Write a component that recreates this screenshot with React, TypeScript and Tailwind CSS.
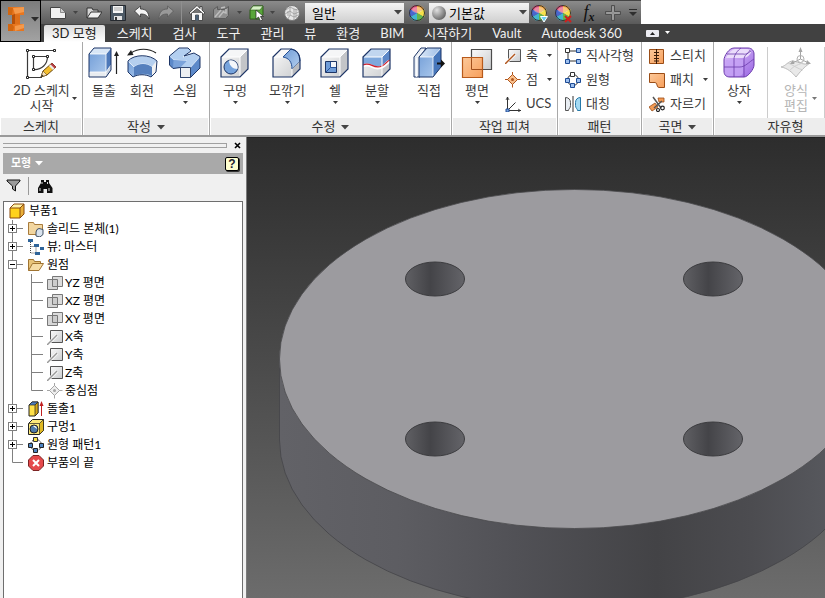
import type { ReactNode } from "react"

type IconProps = { children: ReactNode; size?: number; className?: string; box?: string }

function Icon({ children, size = 16, className = "", box }: IconProps) {
  return (
    <svg
      width={size}
      height={size}
      viewBox={box ?? `0 0 ${size} ${size}`}
      fill="none"
      className={`shrink-0 ${className}`}
      aria-hidden="true"
    >
      {children}
    </svg>
  )
}

function Caret({ className = "text-[#444]", big = false }: { className?: string; big?: boolean }) {
  return big ? (
    <svg width="8" height="5" className={`shrink-0 ${className}`} aria-hidden="true">
      <path d="M0 0h8L4 4.5z" fill="currentColor" />
    </svg>
  ) : (
    <svg width="5" height="4" className={`shrink-0 ${className}`} aria-hidden="true">
      <path d="M0 0h5L2.5 3z" fill="currentColor" />
    </svg>
  )
}

/* ---------- gradients shared by the icons ---------- */

function Defs() {
  return (
    <svg width="0" height="0" className="absolute" aria-hidden="true">
      <defs>
        <linearGradient id="blue" x1="0" y1="0" x2="1" y2="1">
          <stop offset="0" stopColor="#6f9bd6" />
          <stop offset="1" stopColor="#b4cfef" />
        </linearGradient>
        <linearGradient id="blueTop" x1="0" y1="0" x2="1" y2="0">
          <stop offset="0" stopColor="#dbe8f7" />
          <stop offset="1" stopColor="#9dbde6" />
        </linearGradient>
        <linearGradient id="gray" x1="0" y1="0" x2="1" y2="1">
          <stop offset="0" stopColor="#fbfbfb" />
          <stop offset="1" stopColor="#c9cbcd" />
        </linearGradient>
        <linearGradient id="orange" x1="0" y1="0" x2="1" y2="1">
          <stop offset="0" stopColor="#fcc99a" />
          <stop offset="1" stopColor="#f79f5c" />
        </linearGradient>
        <linearGradient id="purple" x1="0" y1="0" x2="1" y2="1">
          <stop offset="0" stopColor="#e0c5fb" />
          <stop offset="1" stopColor="#9a66e2" />
        </linearGradient>
      </defs>
    </svg>
  )
}

/* ---------- large ribbon icons ---------- */

const navy = "#1d3566"

const SketchIcon = () => (
  <Icon size={32}>
    <path d="M2.500 3.500H29M2.500 3.500V30.500H17M8.500 9.500V22.500M8.500 9.500H22.500M22.500 9.500C22.500 17 17 23 8.500 22.500" stroke="#3a3a3a" strokeWidth="1.200" />
    <path d="M1.500 2.500h2v2h-2zM28.500 2.500h2v2h-2zM1.500 29.500h2v2h-2zM7.500 8.500h2v2h-2zM21.500 8.500h2v2h-2zM7.500 21.500h2v2h-2z" fill="#fff" stroke="#222" />
    <path d="M16 30l2-6L27 16l4 4-9 8z" fill="#f3bd2c" stroke="#6c4a13" />
    <path d="M25.500 17.500L27 16l4 4-1.500 1.500z" fill="#b93a4a" />
    <path d="M24 19l1.500-1.500 4 4L28 23z" fill="#e9e9e9" />
    <path d="M16 30l2-6 4 4z" fill="#f7e2bb" stroke="#6c4a13" strokeWidth="0.600" />
    <path d="M16 30l1-2.500 1.500 1.500z" fill="#222" />
  </Icon>
)

const ExtrudeIcon = () => (
  <Icon size={32}>
    <path d="M1 7l5-6h17v22l-5 7H1z" fill="url(#blue)" />
    <path d="M1 7l5-6h17l-5 6z" fill="#d8e6f6" />
    <path d="M18 7l5-6v22l-5 7z" fill="#4c78b9" />
    <path d="M1 25h17v5H1z" fill="#e8ecf0" />
    <path d="M18 25l5-7v5l-5 7z" fill="#c9d3e0" />
    <path d="M2 25h16l5-7M2 7h16v22M18 7l5-6" stroke="#fff" strokeWidth="0.800" />
    <path d="M1 7l5-6h17v22l-5 7H1z" stroke={navy} strokeLinejoin="round" />
    <path d="M28.500 27V8" stroke="#222" strokeWidth="1.200" />
    <path d="M28.500 4l2.500 5h-5z" fill="#222" />
  </Icon>
)

const RevolveIcon = () => (
  <Icon size={32}>
    <path d="M2 14C8 7 24 7 31 14l-1 11-5 5c-5-3-13-3-18 0l-5-5z" fill="url(#blue)" />
    <path d="M2 14C8 7 24 7 31 14l-5 6c-5-4-13-4-18 0z" fill="#b5cfee" stroke="#fff" strokeWidth="0.700" />
    <path d="M8 20c5-4 13-4 18 0v9c-5-3-13-3-18 0z" fill="#5680bd" />
    <path d="M26 20l5-6-1 11-4 5z" fill="#f2f2f2" />
    <path d="M2 14C8 7 24 7 31 14l-1 11-5 5c-5-3-13-3-18 0l-5-5z" stroke={navy} strokeLinejoin="round" />
    <path d="M5 6C12 1 23 1 30 6" stroke="#222" strokeWidth="1.200" />
    <path d="M1 8.500l4-5.500 2.500 5z" fill="#222" />
  </Icon>
)

const SweepIcon = () => (
  <Icon size={32}>
    <path d="M.5 9L10 1h9l3 3-7 5 10-3 6 3.500V21l-9.500 9.500h-10v-10L4 21.500.5 18z" fill="#5c89c9" />
    <path d="M.5 9L10 1h9l3 3-8 6 11-4 6 3.500-9.500 11h-10L18 14 5 13z" fill="#b3cff0" stroke="#fff" strokeWidth="0.600" />
    <path d="M4.500 13L18 14l-6.500 6.500-7.500 1z" fill="#7ba3da" />
    <path d="M.5 9L10 1h9l3 3-7 5 10-3 6 3.500V21l-9.500 9.500h-10v-10L4 21.500.5 18z" stroke={navy} strokeLinejoin="round" />
    <path d="M11.500 20.500h10v10h-10z" fill="#eceff2" stroke="#30466e" />
  </Icon>
)

function Cube({ children, front = "url(#gray)", top = "#f5f6f7" }: { children?: ReactNode; front?: string; top?: string }) {
  return (
    <Icon size={32}>
      <path d="M2 10l8-8h19v20l-8 8H2z" fill={front} />
      <path d="M2 10l8-8h19l-8 8z" fill={top} />
      <path d="M21 10l8-8v20l-8 8z" fill="#c3c5c8" />
      {children}
      <path d="M3 10h18v19M21 10l8-8" stroke="#fff" />
      <path d="M2 10l8-8h19v20l-8 8H2z" stroke={navy} strokeWidth="1.200" />
    </Icon>
  )
}

const HoleIcon = () => (
  <Cube>
    <circle cx="12" cy="20" r="7" fill="#76a3dc" stroke={navy} />
    <path d="M10 13.500a7 7 0 0 1 8.500 8.500c-5 0-8-3-8.500-8.500z" fill="#f4f7fb" />
  </Cube>
)

const FilletIcon = () => (
  <Icon size={32}>
    <path d="M2 10l8-8h10c6 1 9 5 9 12v8l-8 8H2z" fill="url(#gray)" />
    <path d="M2 10l8-8h10l-8 8z" fill="#f8f8f8" />
    <path d="M12 10l8-8c6 1 9 5 9 12l-8 8c0-7-3-11-9-12z" fill="url(#blue)" stroke="#234e94" />
    <path d="M21 22l8-8v8l-8 8z" fill="#b9bbbf" />
    <path d="M3 10h9M21 22v8" stroke="#fff" />
    <path d="M2 10l8-8h10c6 1 9 5 9 12v8l-8 8H2z" stroke={navy} strokeWidth="1.200" />
  </Icon>
)

const ShellIcon = () => (
  <Cube>
    <path d="M6.500 14.500h11v11h-11z" fill="#6f9cd7" stroke={navy} />
    <path d="M11.500 15h5.500v6h-5.500z" fill="#f3f6fa" />
    <path d="M7 25l4.500-4.500H17M11.500 15v5.500" stroke="#26529a" />
  </Cube>
)

const SplitIcon = () => (
  <Cube top="#c1d6ef">
    <path d="M2 10h19v9c-7 5-11-5-19-1z" fill="#7ea8dc" />
    <path d="M21 10l8-8v11l-8 7z" fill="#5c88c8" />
    <path d="M2 19c8-4 10 5 19 1 4-2 5-5 8-6" stroke="#fff" strokeWidth="3" />
    <path d="M2 18c8-4 10 5 19 1 4-2 5-5 8-6" stroke="#cf202c" strokeWidth="1.300" />
  </Cube>
)

const DirectIcon = () => (
  <Icon size={32}>
    <path d="M1 10l7-9h5l-6 9v20H1z" fill="#e9eef4" stroke={navy} />
    <path d="M6 10l8-9h14v19l-8 10H6z" fill="url(#blue)" />
    <path d="M6 10l8-9h14l-8 9z" fill="url(#blueTop)" />
    <path d="M20 10l8-9v19l-8 10z" fill="#4777bb" />
    <path d="M7 10h13v20M20 10l8-9M3.500 11v19M4 10l7-8" stroke="#fff" strokeWidth="0.800" />
    <path d="M6 10l8-9h14v19l-8 10H6z" stroke={navy} strokeLinejoin="round" />
    <path d="M24 16.500h5" stroke="#111" strokeWidth="2" />
    <path d="M28 12.500l4 4-4 4z" fill="#111" />
  </Icon>
)

const PlaneIcon = () => (
  <Icon size={32}>
    <path d="M10.500 2.500h20v20h-20z" fill="url(#gray)" stroke="#4c4c4c" strokeWidth="1.200" />
    <path d="M1.500 10.500h20v20h-20z" fill="url(#orange)" stroke="#b85a1b" strokeWidth="1.200" />
    <path d="M10.500 11v11.500h11" stroke="#a14f1b" />
  </Icon>
)

const BoxFormIcon = () => (
  <Icon size={32}>
    <path d="M1 13c0-4 5-12 10-12h14c4 0 6 3 6 6v11c0 4-6 12-10 12H7c-4 0-6-2-6-6z" fill="url(#purple)" stroke="#6a3bab" />
    <path d="M3 11C5 7 8 3 12 2h12c4 0 5 3 3 5-2 3-5 4-8 4z" fill="#eadcfb" />
    <path d="M3 13h17v12c0 3-2 4-5 4H7c-3 0-5-2-5-5z" fill="#c6a2f5" opacity="0.800" />
    <path d="M11 30V12c0-4 4-9 7-11M1 20h16c5 0 9-5 14-8M4 7h16c4 1 6-2 7-4M21 30V13c0-5 3-6 7-9" stroke="#6a3bab" strokeWidth="0.800" />
  </Icon>
)

const EditFormIcon = () => (
  <Icon size={32}>
    <path d="M1 20c5-1 7-6 12-6 6 1 12 5 17 2-4 3-7 5-14 14-4-5-9-9-15-10z" fill="#e9e9e9" stroke="#bcbcbc" />
    <path d="M8 16c5 2 10 6 15 7M9 24c4-4 7-6 14-8" stroke="#cfcfcf" />
    <path d="M20.500 12V3M20.500 12l-8 4M20.500 12l8 4" stroke="#a5a5a5" />
    <path d="M20.500 0l2 5h-4zM10 17l3-4 1.500 4zM31 17l-4-4-1 4z" fill="#a5a5a5" />
    <circle cx="20.500" cy="12" r="3.500" stroke="#b0b0b0" />
  </Icon>
)

/* ---------- small ribbon icons ---------- */

const AxisIcon = ({ color = "#b0561e" }: { color?: string }) => (
  <Icon>
    <path d="M3.500 1.500h12v12h-12z" fill="url(#gray)" stroke="#555" />
    <path d="M0 16L10 6" stroke="#fff" strokeWidth="3" />
    <path d="M0 16L10 6" stroke={color} strokeWidth="1.500" />
  </Icon>
)

const PointIcon = ({ color = "#b0561e", fill = "#f9c08c" }: { color?: string; fill?: string }) => (
  <Icon>
    <path d="M7.500 2.500l5 5-5 5-5-5z" fill={fill} stroke={color} />
    <path d="M7.500 0v3M7.500 12v3.500M0 7.500h3M12 7.500h3.500" stroke={color} />
    <circle cx="7.500" cy="7.500" r="1.500" fill={color} />
  </Icon>
)

const UcsIcon = () => (
  <Icon>
    <path d="M2.500 1v13.500H16M2.500 14.500l8-8" stroke="#333" />
    <path d="M1 4l1.500-3L4 4M13 13l2.500 1.500L13 16" stroke="#333" strokeWidth="0.800" />
    <path d="M1 13h3v3H1z" fill="#7aa5de" stroke="#244f96" />
  </Icon>
)

const RectPatternIcon = () => (
  <Icon>
    <path d="M3 3h10M3 13h10M3 3v10" stroke="#333" />
    <path d="M.5.5h4v4h-4z" fill="#fff" stroke="#333" />
    <path d="M11.500.5h4v4h-4zM.5 11.500h4v4h-4zM11.500 11.500h4v4h-4z" fill="#9dc0ef" stroke="#1d4b95" />
  </Icon>
)

const CircPatternIcon = ({ dark = false }: { dark?: boolean }) => (
  <Icon>
    <circle cx="8" cy="8" r="5.500" stroke="#333" strokeDasharray={dark ? "2 1" : undefined} />
    <path d="M5.500.5h4v4h-4z" fill={dark ? "#f9e24a" : "#fff"} stroke="#333" />
    <path d="M.5 6.500h4v4h-4zM11.500 6.500h4v4h-4zM5.500 11.500h4v4h-4z" fill={dark ? "#4f86c4" : "#9dc0ef"} stroke={dark ? "#222" : "#1d4b95"} />
  </Icon>
)

const MirrorIcon = () => (
  <Icon>
    <path d="M.5 1.500c3 0 5 2 5 5v3c0 3-2 3-2 5h-3z" fill="#e9eef3" stroke="#555" />
    <path d="M15.500 1.500c-3 0-5 2-5 5v3c0 3 2 3 2 5h3z" fill="#a4daf3" stroke="#2678a8" />
    <path d="M8 0v16" stroke="#333" />
  </Icon>
)

const StitchIcon = () => (
  <Icon>
    <path d="M.5 1.500h14v14H.5z" fill="url(#orange)" stroke="#9b4d16" />
    <path d="M7.500 1v15M5 4.500h5M5 7.500h5M5 10.500h5M5 13h5" stroke="#3b1d08" />
  </Icon>
)

const PatchIcon = () => (
  <Icon>
    <path d="M.5 1.500h15v14H10c-3 0-1-5-4-5H.5z" fill="url(#orange)" stroke="#9b4d16" />
  </Icon>
)

const TrimIcon = () => (
  <Icon>
    <path d="M0 11l6-4 3 4-6 4zM9 2h6v4h-5z" fill="#f39a53" stroke="#9b4d16" strokeWidth="0.800" />
    <path d="M4 1l8 11M13 5L5 12" stroke="#555" strokeWidth="1.500" />
    <circle cx="13.500" cy="12" r="1.800" stroke="#222" strokeWidth="1.200" />
    <circle cx="9" cy="14" r="1.500" stroke="#222" strokeWidth="1.200" />
  </Icon>
)

/* ---------- quick access icons ---------- */

const NewIcon = () => (
  <Icon>
    <path d="M.5 2.500h10l5 5v6H.5z" fill="#f1f1f1" stroke="#444" />
    <path d="M10.500 2.500v5h5z" fill="#cfcfcf" stroke="#666" strokeWidth="0.700" />
  </Icon>
)

const OpenIcon = () => (
  <Icon>
    <path d="M1 13V3h5l1 2h5v3" fill="#d4d4d4" stroke="#333" />
    <path d="M1 13l4-6h11l-4 6z" fill="#f0f0f0" stroke="#333" />
  </Icon>
)

const SaveIcon = () => (
  <Icon>
    <path d="M.5.5h15v15H.5z" fill="#4d5a66" stroke="#25292e" />
    <path d="M3 1h10v7H3z" fill="#f5f5f5" />
    <path d="M4 3h8M4 5h8" stroke="#aaa" />
    <path d="M4 11h8v4H4z" fill="#e3e3e3" />
    <path d="M5 12h2v3H5z" fill="#333" />
  </Icon>
)

const UndoIcon = ({ flip = false }: { flip?: boolean }) => (
  <Icon>
    <path
      d={flip ? "M15.500 6L9.500 1v3C4 4 1 7 1 14c2-4 4-5 8.500-5v3z" : "M.5 6l6-5v3c5.500 0 8.500 3 8.500 10-2-4-4-5-8.500-5v3z"}
      fill={flip ? "#999" : "#f4f4f4"}
      stroke={flip ? "#5c5c5c" : "#333"}
      strokeWidth="0.800"
    />
  </Icon>
)

const HomeIcon = () => (
  <Icon>
    <path d="M2.500 8v7.500h4V10h3v5.500h4V8" fill="#f5f5f5" stroke="#333" strokeWidth="0.800" />
    <path d="M6.500 10h3v5.500h-3z" fill="#4a6076" />
    <path d="M8 .5L0 8l1.500 1L8 3.500 14.500 9 16 8l-3-3V1.500h-2v2z" fill="#fff" stroke="#333" strokeWidth="0.800" />
  </Icon>
)

const UpdateIcon = () => (
  <Icon>
    <path d="M.5 4.500l4-3v3h7l4-3v9l-3 3H.5z" fill="#8f8f8f" stroke="#5c5c5c" />
    <path d="M2 12l6-7M6 12l5-6M13 4v4l-3-1M8 3l4-1" stroke="#bdbdbd" strokeWidth="1.500" />
  </Icon>
)

const SelectIcon = () => (
  <Icon>
    <path d="M1 5l3-4h10v9l-4 4H1z" fill="#58a53a" stroke="#2d5d19" />
    <path d="M1 5l3-4h10l-3 4z" fill="#d6f0c6" stroke="#2d5d19" strokeWidth="0.600" />
    <path d="M7 5v9l2.500-2 2 4 2-1-2-3.500h3z" fill="#fff" stroke="#222" strokeWidth="0.700" />
  </Icon>
)

const BallIcon = () => (
  <Icon>
    <circle cx="8" cy="8" r="7.500" fill="#e6e6e6" stroke="#777" />
    <path d="M2 5l4-3 4 2 4 1M1 9l5-3 4 3 5-2M4 14l2-4 4 2 4-2M6 2v4M10 4v5M6 6v4M10 9v6M4 6v5M12 4v9" stroke="#999" strokeWidth="0.800" />
  </Icon>
)

const ColorWheel = () => (
  <Icon>
    <path d="M8 8V0a8 8 0 0 1 7 4z" fill="#f5a63a" />
    <path d="M8 8l7-4a8 8 0 0 1 0 8z" fill="#f6e04a" />
    <path d="M8 8l7 4a8 8 0 0 1-7 4z" fill="#63b74b" />
    <path d="M8 8v8a8 8 0 0 1-7-4z" fill="#42b6cf" />
    <path d="M8 8l-7 4a8 8 0 0 1 0-8z" fill="#4966cf" />
    <path d="M8 8L1 4a8 8 0 0 1 7-4z" fill="#df4a76" />
    <circle cx="8" cy="8" r="7.500" stroke="#333" />
    <ellipse cx="8" cy="5" rx="5" ry="3" fill="#fff" opacity="0.350" />
  </Icon>
)

const AdjustIcon = () => (
  <span className="relative">
    <ColorWheel />
    <Icon size={8} className="absolute -right-px -bottom-0.5">
      <path d="M.5 1.500h7L4 7z" fill="#6cd0f2" stroke="#fff" />
    </Icon>
  </span>
)

const ClearIcon = () => (
  <span className="relative">
    <ColorWheel />
    <Icon size={8} className="absolute -right-px -bottom-0.5">
      <path d="M1 1l6 6M7 1L1 7" stroke="#d01f1f" strokeWidth="2" />
    </Icon>
  </span>
)

const PlusIcon = () => (
  <Icon>
    <path d="M6.500.5h3v6h6v3h-6v6h-3v-6h-6v-3h6z" fill="#7b7b7b" stroke="#4f4f4f" />
    <path d="M7.500 1.500h1v6h6v1h-6v6h-1v-6h-6v-1h6z" stroke="#9a9a9a" />
  </Icon>
)

/* ---------- header ---------- */

function QuickButton({ label, className, children }: { label: string; className: string; children: ReactNode }) {
  return (
    <button aria-label={label} className={`flex h-[23px] shrink-0 items-center justify-center ${className}`}>
      {children}
    </button>
  )
}

function QuickAccess() {
  return (
    <div className="flex h-6 w-fit items-center border-t border-[#444] bg-linear-to-b from-[#8b8b8b] to-[#5a5a5a]">
      <QuickButton label="새로 만들기" className="ml-[7px] w-5"><NewIcon /></QuickButton>
      <QuickButton label="새로 만들기 옵션" className="w-3.5"><Caret /></QuickButton>
      <QuickButton label="열기" className="w-6"><OpenIcon /></QuickButton>
      <QuickButton label="저장" className="w-6"><SaveIcon /></QuickButton>
      <QuickButton label="명령 취소" className="w-6"><UndoIcon /></QuickButton>
      <QuickButton label="명령 복구" className="w-6"><UndoIcon flip /></QuickButton>
      <span className="mx-[3px] h-[23px] w-px bg-[#8f8f8f]" />
      <QuickButton label="홈" className="w-6"><HomeIcon /></QuickButton>
      <QuickButton label="업데이트" className="w-6"><UpdateIcon /></QuickButton>
      <QuickButton label="업데이트 옵션" className="w-3"><Caret /></QuickButton>
      <QuickButton label="선택" className="w-6"><SelectIcon /></QuickButton>
      <QuickButton label="선택 옵션" className="w-1.5"><Caret /></QuickButton>
      <QuickButton label="재질" className="ml-[7px] w-5"><BallIcon /></QuickButton>
      <span className="ml-[3px] flex h-5 w-[99px] items-center bg-linear-to-b from-[#f4f4f4] to-[#cfcfcf] pr-0.5">
        <select aria-label="재질 선택" className="min-w-0 flex-1 appearance-none pl-[7px] text-[13px] leading-5 text-black">
          <option>일반</option>
        </select>
        <Caret big className="text-[#444]" />
      </span>
      <QuickButton label="모양" className="w-[25px]"><ColorWheel /></QuickButton>
      <span className="flex h-5 w-[100px] items-center bg-linear-to-b from-[#f4f4f4] to-[#cfcfcf] pr-0.5 pl-[3px]">
        <span className="h-3.5 w-3.5 shrink-0 rounded-full bg-radial-[at_35%_30%] from-[#e0e0e0] via-[#909090] to-[#3f3f3f]" />
        <select aria-label="모양 선택" className="min-w-0 flex-1 appearance-none pl-[3px] text-[13px] leading-5 text-black">
          <option>기본값</option>
        </select>
        <Caret big className="text-[#444]" />
      </span>
      <QuickButton label="조정" className="w-5"><AdjustIcon /></QuickButton>
      <QuickButton label="지우기" className="w-7"><ClearIcon /></QuickButton>
      <QuickButton label="매개변수" className="w-6 font-['Liberation_Serif',serif] text-[18px] text-[#111] italic">
        <span>f<sub className="text-[12px] font-bold">x</sub></span>
      </QuickButton>
      <QuickButton label="추가" className="w-6"><PlusIcon /></QuickButton>
      <QuickButton label="사용자화" className="w-4">
        <svg width="8" height="7" aria-hidden="true">
          <path d="M0 0h8v1H0zM0 3h8L4 7z" fill="#2e2e2e" />
        </svg>
      </QuickButton>
    </div>
  )
}

const tabs = ["스케치", "검사", "도구", "관리", "뷰", "환경", "BIM", "시작하기", "Vault", "Autodesk 360"]

function Header() {
  return (
    <header className="flex bg-[#414141]">
      <button
        aria-label="응용프로그램 메뉴"
        className="flex w-[41px] shrink-0 items-center justify-between border border-black bg-linear-to-b from-[#7c7c7c] to-[#a2a2a2] pr-px pb-1 pl-1.5"
      >
        <svg width="18" height="28" viewBox="0 0 18 28" aria-hidden="true">
          <path d="M1 2h16v8h-4v9h4v7H1v-7h4v-9H1z" fill="#e8761f" />
          <path d="M1 2l5 1-1 7H1zM1 19h4l2 3-1 4H1z" fill="#d2660f" />
          <path d="M6 3l11-1v5l-9 2zM8 21l9-2v4l-9 3z" fill="#f4994b" />
          <path d="M5 10l3-1v10H5z" fill="#b65009" />
          <path d="M8 9l5 1v9H8z" fill="#de6f1a" />
        </svg>
        <Caret big className="text-[#2c2c2c]" />
      </button>
      <div className="flex min-w-0 flex-1 flex-col">
        <div className="h-6 bg-white">
          <QuickAccess />
        </div>
        <nav className="flex h-[18px] items-center bg-[#414141] text-[13px] leading-[18px] whitespace-nowrap text-[#f0f0f0]">
          <a href="#" className="ml-[3px] h-[17px] self-end rounded-t-xs bg-linear-to-b from-[#dcdcdc] to-white px-2 leading-4 text-[#222]">
            3D 모형
          </a>
          <div className="ml-3 flex gap-5 leading-4">
            {tabs.map((tab) => (
              <a key={tab} href="#">{tab}</a>
            ))}
          </div>
          <button aria-label="리본 최소화" className="ml-6 flex items-center gap-1.5">
            <svg width="13" height="7" aria-hidden="true">
              <rect width="13" height="7" rx="1" fill="#ececf2" />
              <path d="M4 5l2.500-3L9 5z" fill="#222" />
            </svg>
            <Caret className="text-white" />
          </button>
        </nav>
      </div>
    </header>
  )
}

/* ---------- ribbon ---------- */

type PanelProps = { title: string; menu?: boolean; className: string; children: ReactNode }

function Panel({ title, menu, className, children }: PanelProps) {
  return (
    <section className={`flex flex-col border-r border-[#a9a9a9] ${className}`}>
      <div className="flex h-[76px] pt-[5px]">{children}</div>
      <h2 className="flex h-[17px] items-center justify-center gap-1.5 border-x border-white bg-[#ededed] pb-px text-[13px] leading-4 text-[#333]">
        {title}
        {menu && <Caret big className="mt-0.5 text-[#444]" />}
      </h2>
    </section>
  )
}

type ToolProps = { icon: ReactNode; label: string; menu?: boolean; className: string }

function Tool({ icon, label, menu, className }: ToolProps) {
  return (
    <button className={`flex shrink-0 flex-col items-center ${className}`}>
      {icon}
      <span className="mt-0.5 leading-[18px]">{label}</span>
      {menu && <Caret className="mt-0.5" />}
    </button>
  )
}

function SmallTool({ icon, label, menu }: { icon: ReactNode; label: string; menu?: boolean }) {
  return (
    <button className="flex h-6 items-center gap-[5px]">
      {icon}
      <span>{label}</span>
      {menu && <Caret className="ml-1" />}
    </button>
  )
}

function Ribbon() {
  return (
    <div className="flex overflow-hidden border-b-2 border-[#9a9a9a] bg-white text-[13px] whitespace-nowrap text-[#3c3c3c]">
      <Panel title="스케치" className="w-[83px] shrink-0">
        <button className="flex w-full justify-center">
          <span className="flex flex-col items-center pl-2">
            <SketchIcon />
            <span className="mt-1 leading-[15px]">2D 스케치<br />시작</span>
          </span>
          <Caret className="mt-[50px] ml-0.5" />
        </button>
      </Panel>
      <Panel title="작성" menu className="w-[127px] shrink-0">
        <Tool icon={<ExtrudeIcon />} label="돌출" className="ml-0.5 w-[38px]" />
        <Tool icon={<RevolveIcon />} label="회전" className="w-[38px]" />
        <Tool icon={<SweepIcon />} label="스윕" menu className="w-12" />
      </Panel>
      <Panel title="수정" menu className="w-[242px] shrink-0">
        <Tool icon={<HoleIcon />} label="구멍" menu className="w-[50px]" />
        <Tool icon={<FilletIcon />} label="모깎기" menu className="w-[54px]" />
        <Tool icon={<ShellIcon />} label="쉘" menu className="w-[42px]" />
        <Tool icon={<SplitIcon />} label="분할" menu className="w-[42px]" />
        <span className="ml-[7px] w-px bg-[#ccc]" />
        <Tool icon={<DirectIcon />} label="직접" className="w-12" />
      </Panel>
      <Panel title="작업 피쳐" className="w-[106px] shrink-0">
        <Tool icon={<PlaneIcon />} label="평면" menu className="w-[50px]" />
        <div className="-mt-[3px] ml-[3px]">
          <SmallTool icon={<AxisIcon />} label="축" menu />
          <SmallTool icon={<PointIcon />} label="점" menu />
          <SmallTool icon={<UcsIcon />} label="UCS" />
        </div>
      </Panel>
      <Panel title="패턴" className="w-[84px] shrink-0">
        <div className="-mt-[3px] ml-[7px]">
          <SmallTool icon={<RectPatternIcon />} label="직사각형" />
          <SmallTool icon={<CircPatternIcon />} label="원형" />
          <SmallTool icon={<MirrorIcon />} label="대칭" />
        </div>
      </Panel>
      <Panel title="곡면" menu className="w-[72px] shrink-0">
        <div className="-mt-[3px] ml-[7px]">
          <SmallTool icon={<StitchIcon />} label="스티치" />
          <SmallTool icon={<PatchIcon />} label="패치" menu />
          <SmallTool icon={<TrimIcon />} label="자르기" />
        </div>
      </Panel>
      <Panel title="자유형" className="min-w-36 flex-1">
        <Tool icon={<BoxFormIcon />} label="상자" menu className="w-[50px]" />
        <span className="ml-[3px] w-px bg-[#ccc]" />
        <button disabled className="flex w-[49px] justify-end text-[#b5b5b5]">
          <span className="flex flex-col items-center">
            <EditFormIcon />
            <span className="mt-1 leading-[15px]">양식<br />편집</span>
          </span>
          <Caret className="mt-[50px] text-[#777]" />
        </button>
        <span className="ml-[7px] w-px bg-[#ccc]" />
      </Panel>
    </div>
  )
}

/* ---------- model browser ---------- */

const PartIcon = () => (
  <Icon>
    <path d="M1 5l4-4h10v10l-4 4H1z" fill="#ffd21c" />
    <path d="M1 5l4-4h10l-4 4z" fill="#fff3a8" />
    <path d="M11 5l4-4v10l-4 4z" fill="#e9b03a" />
    <path d="M1 5l4-4h10v10l-4 4H1zM1 5h10v10M11 5l4-4" stroke="#8a4b0c" strokeLinejoin="round" />
  </Icon>
)

const BodiesIcon = () => (
  <Icon>
    <path d="M.5 13.500v-12h5l1 2h8v10z" fill="#f2d6a0" stroke="#a87b3b" />
    <path d="M9 8.500l2-1 4 1v5l-3 2.500-4-1v-4z" fill="#d9e3ee" stroke="#3f4f63" />
  </Icon>
)

const ViewsIcon = () => (
  <Icon>
    <path d="M2.500 3v11h4M2.500 7.500h6M8 7.500v7" stroke="#444" strokeDasharray="1 1" />
    <path d="M0 0h5v3H0zM6 5h5v3H6zM12 8h4v3h-4zM7 13h5v3H7z" fill="#2f6499" />
  </Icon>
)

const FolderIcon = () => (
  <Icon>
    <path d="M.5 13.500V2.500h5l1 2h6v3" fill="#e8c47b" stroke="#a07432" />
    <path d="M.5 13.500l4-7h11l-4.500 7z" fill="#f6dca6" stroke="#a07432" />
  </Icon>
)

const WorkPlaneIcon = () => (
  <Icon>
    <path d="M5.500 1.500h10v10h-10z" fill="#dcdcdc" stroke="#777" />
    <path d="M.5 4.500h10v10H.5z" fill="#c4c4c4" fillOpacity="0.700" stroke="#777" />
    <path d="M5.500 5v6.500h5" stroke="#777" />
  </Icon>
)

const ExtrusionIcon = () => (
  <Icon>
    <path d="M1 4l3-3h6v11l-3 3H1z" fill="#ffe14a" stroke="#222" />
    <path d="M1 4l3-3h6L7 4z" fill="#4f7fc0" stroke="#222" strokeWidth="0.700" />
    <path d="M7 4l3-3v11l-3 3z" fill="#d4a514" stroke="#222" strokeWidth="0.700" />
    <path d="M13.500 15V3" stroke="#c11f1f" />
    <path d="M13.500 0l2 5h-4z" fill="#c11f1f" />
  </Icon>
)

const HoleFeatureIcon = () => (
  <Icon>
    <path d="M.5 4.500l4-4h11v11l-4 4H.5z" fill="#fbe87a" stroke="#222" />
    <path d="M11.500 4.500l4-4v11l-4 4z" fill="#e0b822" stroke="#222" strokeWidth="0.700" />
    <path d="M1 4.500h10.500" stroke="#222" strokeWidth="0.700" />
    <circle cx="6" cy="10" r="4" fill="#4f7ba8" stroke="#222" />
    <path d="M5 7a3 3 0 0 1 4 3z" fill="#fff" />
  </Icon>
)

const EndIcon = () => (
  <Icon>
    <path d="M5 .5h6L15.500 5v6L11 15.500H5L.5 11V5z" fill="#e5494b" stroke="#7d2424" />
    <path d="M5 5l6 6M11 5l-6 6" stroke="#fff" strokeWidth="2" />
  </Icon>
)

// Guide lines with an optional +/- box, one row high
function Branch({ state, last }: { state?: "open" | "closed"; last?: boolean }) {
  return (
    <svg width="24" height="18" className="shrink-0" aria-hidden="true">
      <path d={last ? "M8.500 0V8.500H19" : "M8.500 0V18M8.500 8.500H19"} fill="none" stroke="#808080" />
      {state && (
        <>
          <rect x="4.500" y="4.500" width="8" height="8" fill="#fff" stroke="#808080" />
          <path d={state === "open" ? "M6 8.500h5" : "M6 8.500h5M8.500 6v5"} stroke="#000" />
        </>
      )}
    </svg>
  )
}

function SubBranch({ last }: { last?: boolean }) {
  return (
    <>
      <svg width="24" height="18" className="shrink-0" aria-hidden="true">
        <path d="M8.500 0V18" stroke="#808080" />
      </svg>
      <svg width="19" height="18" className="shrink-0" aria-hidden="true">
        <path d={last ? "M3.500 0V8.500H15" : "M3.500 0V18M3.500 8.500H15"} fill="none" stroke="#808080" />
      </svg>
    </>
  )
}

const origin = [
  { label: "YZ 평면", icon: <WorkPlaneIcon /> },
  { label: "XZ 평면", icon: <WorkPlaneIcon /> },
  { label: "XY 평면", icon: <WorkPlaneIcon /> },
  { label: "X축", icon: <AxisIcon color="#999" /> },
  { label: "Y축", icon: <AxisIcon color="#999" /> },
  { label: "Z축", icon: <AxisIcon color="#999" /> },
  { label: "중심점", icon: <PointIcon color="#a5a5a5" fill="#eee" /> },
]

const nodes = [
  { label: "솔리드 본체(1)", icon: <BodiesIcon />, state: "closed" as const },
  { label: "뷰: 마스터", icon: <ViewsIcon />, state: "closed" as const },
  { label: "원점", icon: <FolderIcon />, state: "open" as const, children: origin },
  { label: "돌출1", icon: <ExtrusionIcon />, state: "closed" as const },
  { label: "구멍1", icon: <HoleFeatureIcon />, state: "closed" as const },
  { label: "원형 패턴1", icon: <CircPatternIcon dark />, state: "closed" as const },
  { label: "부품의 끝", icon: <EndIcon /> },
]

function Browser() {
  return (
    <aside className="flex w-[247px] shrink-0 flex-col border-r border-[#7a7a7a] bg-[#f0f0f0] px-[3px]">
      <div className="flex h-4 items-center gap-1">
        <div className="h-[5px] flex-1 border-y border-r border-[#a0a0a0]" />
        <button aria-label="닫기" className="flex w-3 justify-center">
          <svg width="7" height="7" aria-hidden="true">
            <path d="M1 1l5 5M6 1L1 6" stroke="#000" strokeWidth="1.600" />
          </svg>
        </button>
      </div>
      <div className="flex h-[21px] items-center justify-between bg-[#a9a9a9] pr-1 pl-2">
        <button className="flex items-center gap-1 text-[11px] font-bold text-white">
          모형
          <Caret big className="text-white" />
        </button>
        <button
          aria-label="도움말"
          className="flex h-3.5 w-3.5 items-center justify-center rounded-xs border border-black bg-[#ffffd0] font-['Liberation_Sans',sans-serif] text-[12px] font-bold text-[#223] shadow-[1px_1px_0_#333]"
        >
          ?
        </button>
      </div>
      <div className="flex h-[27px] items-center pb-1 pl-[3px]">
        <button aria-label="필터">
          <Icon>
            <path d="M1 2h13v1L9.500 8v5l-3-2V8L1 3z" fill="#9b9b9b" stroke="#111" />
          </Icon>
        </button>
        <span className="mr-2 ml-1.5 h-[18px] w-px bg-[#999]" />
        <button aria-label="찾기">
          <Icon>
            <path d="M4 2h3v2h2V2h3v3l3.500 5v5H10v-4H6.500v4H1v-5l3-5z" fill="#111" />
            <path d="M3 10v3M12 10v3M5 4v2M10.500 4v2" stroke="#ddd" />
          </Icon>
        </button>
      </div>
      <ul className="flex-1 border border-b-0 border-[#6e6e6e] bg-white text-[12px] leading-[18px] whitespace-nowrap text-black">
        <li className="flex h-[18px] items-center gap-1 pl-[5px]">
          <PartIcon />
          부품1
        </li>
        {nodes.map((node) => (
          <li key={node.label}>
            <div className="flex items-center">
              {node.state ? (
                <button aria-label={node.state === "open" ? "축소" : "확장"} className="flex">
                  <Branch state={node.state} />
                </button>
              ) : (
                <Branch last />
              )}
              {node.icon}
              <span className="ml-[3px]">{node.label}</span>
            </div>
            {node.children && (
              <ul>
                {node.children.map((child, i) => (
                  <li key={child.label} className="flex items-center">
                    <SubBranch last={i === origin.length - 1} />
                    {child.icon}
                    <span className="ml-0.5">{child.label}</span>
                  </li>
                ))}
              </ul>
            )}
          </li>
        ))}
      </ul>
    </aside>
  )
}

/* ---------- viewport ---------- */

const holes = [
  [188, 141],
  [466, 141],
  [188, 301],
  [466, 301],
]

function Viewport() {
  return (
    <main className="min-w-0 flex-1 border-t border-[#222] bg-linear-to-b from-[#2d2d2d] to-[#6c6c6c]">
      <svg viewBox="0 0 578 460" preserveAspectRatio="xMinYMin slice" className="h-full w-full" role="img" aria-label="부품1">
        <defs>
          <linearGradient id="side" gradientUnits="userSpaceOnUse" x1="32" y1="0" x2="622" y2="0">
            <stop offset="0" stopColor="#626267" />
            <stop offset="0.200" stopColor="#5d5d62" />
            <stop offset="0.400" stopColor="#515156" />
            <stop offset="0.640" stopColor="#434346" />
            <stop offset="0.800" stopColor="#4c4c50" />
            <stop offset="1" stopColor="#5c5e64" />
          </linearGradient>
          <linearGradient id="bore">
            <stop offset="0" stopColor="#606064" />
            <stop offset="0.420" stopColor="#444448" />
            <stop offset="1" stopColor="#646469" />
          </linearGradient>
        </defs>
        <path d="M32.500 221v81a295 169.500 0 0 0 590 0v-81z" fill="url(#side)" stroke="#444447" strokeWidth="0.800" />
        <ellipse cx="327.500" cy="221" rx="295" ry="169.500" fill="#9c9b9f" stroke="#4a4a4d" strokeWidth="0.800" />
        {holes.map(([x, y]) => (
          <ellipse key={`${x}-${y}`} cx={x} cy={y} rx="29.500" ry="17" fill="url(#bore)" stroke="#3c3c3f" />
        ))}
      </svg>
    </main>
  )
}

export default function App() {
  return (
    <div className="flex h-screen flex-col overflow-hidden bg-white font-[Lato,'Noto_Sans_CJK_KR',sans-serif]">
      <Defs />
      <Header />
      <Ribbon />
      <div className="flex min-h-0 flex-1">
        <Browser />
        <Viewport />
      </div>
    </div>
  )
}
